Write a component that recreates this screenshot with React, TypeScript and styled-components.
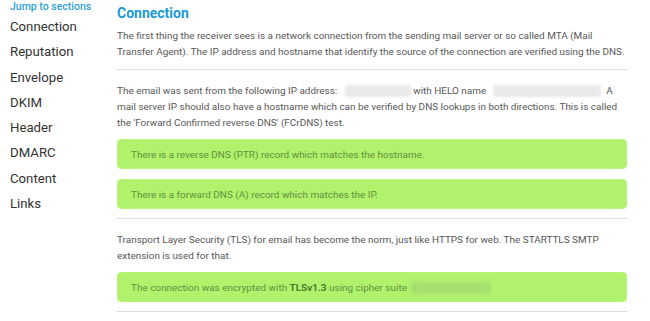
import React from 'react';
import styled, { createGlobalStyle } from 'styled-components';

const GlobalStyle = createGlobalStyle`
  html, body {
    margin: 0;
    padding: 0;
    background: #ffffff;
  }
  body {
    font-family: Roboto, "Liberation Sans", Arial, sans-serif;
    overflow: hidden;
  }
`;

const Layout = styled.div`
  display: flex;
  width: 650px;
  height: 321px;
  overflow: hidden;
`;

const Sidebar = styled.nav`
  width: 107px;
  padding: 1px 0 0 10px;
  flex-shrink: 0;
`;

const JumpLabel = styled.div`
  font-size: 10.5px;
  line-height: 12px;
  font-weight: 500;
  color: #2f9fd8;
  margin-bottom: 1px;
`;

const NavItem = styled.a`
  display: block;
  font-size: 13.2px;
  line-height: 25.3px;
  color: #333333;
  text-decoration: none;
`;

const Main = styled.main`
  width: 510px;
  padding-top: 4px;
`;

const Heading = styled.h2`
  margin: 0 0 6px;
  font-size: 14px;
  line-height: 18px;
  font-weight: 700;
  color: #1b9ad6;
`;

const Paragraph = styled.p`
  margin: 0;
  font-size: 9.95px;
  line-height: 16px;
  color: #575757;
  white-space: nowrap;
`;

const Divider = styled.hr`
  border: none;
  border-top: 1px solid #dddddd;
  margin: 9px 0 13px;
`;

const Results = styled.div`
  display: flex;
  flex-direction: column;
  gap: 10px;
  margin-top: 8px;
`;

const Result = styled.div`
  display: flex;
  align-items: center;
  height: 30px;
  padding: 0 13px;
  border-radius: 4px;
  background: #b0f26b;
  border: 1px solid #b8f47c;
  box-sizing: border-box;
  font-size: 9.95px;
  color: #62903f;
  white-space: pre;
`;

const Strong = styled.strong`
  font-weight: 700;
  color: #4c7a2c;
`;

const Redacted = styled.span<{ $w: number; $before?: number; $after?: number; $tone?: 'grey' | 'green' }>`
  display: inline-block;
  width: ${(p) => p.$w}px;
  height: 12px;
  margin: 2px ${(p) => p.$after ?? 0}px 0 ${(p) => p.$before ?? 0}px;
  vertical-align: top;
  border-radius: 3px;
  background: ${(p) => (p.$tone === 'green' ? '#a6df6e' : '#e9e9e9')};
  filter: blur(1.5px);
`;

const sections = ['Connection', 'Reputation', 'Envelope', 'DKIM', 'Header', 'DMARC', 'Content', 'Links'];

const App: React.FC = () => (
  <>
    <GlobalStyle />
    <Layout>
      <Sidebar>
        <JumpLabel>Jump to sections</JumpLabel>
        {sections.map((s) => (
          <NavItem key={s} href={`#${s.toLowerCase()}`}>
            {s}
          </NavItem>
        ))}
      </Sidebar>
      <Main>
        <Heading>Connection</Heading>
        <Paragraph>
          The first thing the receiver sees is a network connection from the sending mail server or so called MTA (Mail
          <br />
          Transfer Agent). The IP address and hostname that identify the source of the connection are verified using the
          DNS.
        </Paragraph>
        <Divider />
        <Paragraph>
          The email was sent from the following IP address: <Redacted $w={66} $before={5} /> with HELO name{' '}
          <Redacted $w={108} $before={4} $after={3} /> A
          <br />
          mail server IP should also have a hostname which can be verified by DNS lookups in both directions. This is
          called
          <br />
          the 'Forward Confirmed reverse DNS' (FCrDNS) test.
        </Paragraph>
        <Results>
          <Result>There is a reverse DNS (PTR) record which matches the hostname.</Result>
          <Result>There is a forward DNS (A) record which matches the IP.</Result>
        </Results>
        <Divider />
        <Paragraph>
          Transport Layer Security (TLS) for email has become the norm, just like HTTPS for web. The STARTTLS SMTP
          <br />
          extension is used for that.
        </Paragraph>
        <Results>
          <Result>
            The connection was encrypted with <Strong>TLSv1.3</Strong> using cipher suite{' '}
            <Redacted $w={80} $before={2} $tone="green" />
          </Result>
        </Results>
        <Divider />
      </Main>
    </Layout>
  </>
);

export default App;
